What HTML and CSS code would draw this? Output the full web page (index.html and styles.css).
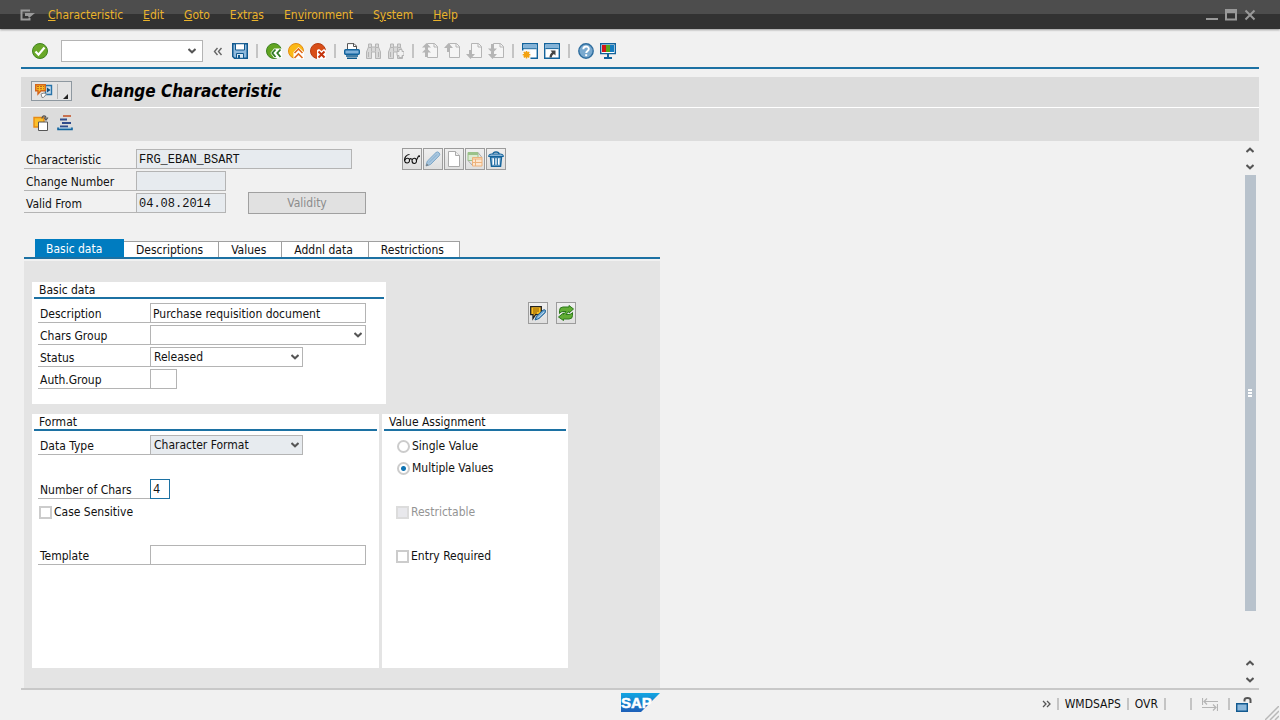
FILE: index.html
```html
<!DOCTYPE html>
<html lang="en">
<head>
    <meta charset="UTF-8">
    <meta name="viewport" content="width=device-width, initial-scale=1.0">
    <title>Change Characteristic</title>
    <link rel="stylesheet" href="styles.css">
</head>
<body>

<header class="titlebar">
    <button class="menu-icon" aria-label="Window menu">
        <svg width="16" height="12" viewBox="0 0 16 12"><path d="M10 1.5H1.5v9H9.5V9" fill="none" stroke="#9a9a9a" stroke-width="2"/><path d="M5 4h10L9 9l-1-2H5z" fill="#9a9a9a"/></svg>
    </button>
    <nav class="menu">
        <button><u>C</u>haracteristic</button>
        <button><u>E</u>dit</button>
        <button><u>G</u>oto</button>
        <button>Extr<u>a</u>s</button>
        <button>En<u>v</u>ironment</button>
        <button>S<u>y</u>stem</button>
        <button><u>H</u>elp</button>
    </nav>
    <div class="window-buttons">
        <button aria-label="Minimize"><svg width="12" height="12" viewBox="0 0 12 12"><path d="M0 10h12" stroke="#999" stroke-width="2"/></svg></button>
        <button aria-label="Maximize"><svg width="12" height="12" viewBox="0 0 12 12"><path d="M1 1v9.500h10V1z" fill="none" stroke="#999" stroke-width="2"/><path d="M0 0h12v4H0z" fill="#999"/></svg></button>
        <button aria-label="Close"><svg width="12" height="12" viewBox="0 0 12 12"><path d="M1.500 1.500l9 9M10.500 1.500l-9 9" stroke="#999" stroke-width="2"/></svg></button>
    </div>
</header>

<div class="window">
    <div class="toolbar">
        <button class="tool" aria-label="Enter"><svg class="icon" viewBox="0 0 16 16"><circle cx="8" cy="8" r="7.500" fill="#6aa828" stroke="#3f8420"/><path d="M3.500 8.500l3 3.200 6-7.200" fill="none" stroke="#fff" stroke-width="2.200"/></svg></button>
        <div class="select command">
            <select aria-label="Command"><option></option></select>
            <svg class="arrow" viewBox="0 0 8 6"><path d="M0.500 1L4 4.300 7.500 1" /></svg>
        </div>
        <button class="tool" aria-label="Hide command field"><svg class="icon" viewBox="0 0 16 16"><path d="M7.500 5L4.500 8.500l3 3.500M11.500 5l-3 3.500 3 3.500" fill="none" stroke="#666" stroke-width="1.400"/></svg></button>
        <button class="tool" aria-label="Save"><svg class="icon" viewBox="0 0 16 16"><path d="M.75.75h14.500v14.500H2.500L.75 13.500z" fill="#8fb9dc" stroke="#10598f" stroke-width="1.500"/><path d="M3.500.75h9V7h-9z" fill="#fff" stroke="#10598f"/><path d="M4.500 10.500h7v4.750h-7z" fill="#d9e8f4" stroke="#10598f"/><path d="M6 12h2v3H6z" fill="#10598f"/></svg></button>
        <span class="sep"></span>
        <button class="tool" aria-label="Back"><svg class="icon" viewBox="0 0 16 16"><circle cx="8" cy="8" r="7.500" fill="#62a420" stroke="#3d8222"/><path d="M8 5.500L4.500 10 8 15h8V5.500z" fill="#fff"/><path d="M9.500 6.500L6.300 10l3.200 4M14.500 6.500L11.300 10l3.200 4" fill="none" stroke="#2f7a24" stroke-width="1.800"/></svg></button>
        <button class="tool" aria-label="Exit"><svg class="icon" viewBox="0 0 16 16"><circle cx="8" cy="8" r="7.500" fill="#fbb917" stroke="#e58a10"/><path d="M5.500 9L10.500 4l5.500 5v7H5.500z" fill="#fff"/><path d="M6.500 10l4-4 4 4M6.500 15l4-4 4 4" fill="none" stroke="#df6a1a" stroke-width="1.600"/></svg></button>
        <button class="tool" aria-label="Cancel"><svg class="icon" viewBox="0 0 16 16"><circle cx="8" cy="8" r="7.500" fill="#d84e18" stroke="#b63c12"/><path d="M7 7l2-1 2.500 2L14 6l2 1.500V16H7z" fill="#fff"/><path d="M8.500 8.500l6 6M14.500 8.500l-6 6" stroke="#c4330c" stroke-width="2"/></svg></button>
        <span class="sep"></span>
        <button class="tool" aria-label="Print"><svg class="icon" viewBox="0 0 16 16"><path d="M3.500 7V.600h6.500l2.500 2.500V7" fill="#fff" stroke="#555"/><path d="M9.500.500v3h3" fill="none" stroke="#555"/><rect x=".700" y="6.700" width="14.600" height="4.600" rx="1" fill="#7fb1da" stroke="#12639c" stroke-width="1.400"/><path d="M2 13h12M3 15.200h10" stroke="#0d5a8e" stroke-width="1.500"/></svg></button>
        <button class="tool" aria-label="Find" disabled><svg class="icon" viewBox="0 0 16 16"><use href="#i-binoculars"/></svg></button>
        <button class="tool" aria-label="Find next" disabled><svg class="icon" viewBox="0 0 16 16"><use href="#i-binoculars"/><path d="M9 8.500h2V6.500h3v2h2v4h-2v2h-3v-2H9z" fill="#f1f1f1" stroke="#b5b5b5"/></svg></button>
        <span class="sep"></span>
        <button class="tool" aria-label="First page" disabled><svg class="icon" viewBox="0 0 16 16"><use href="#i-page"/><path d="M4.500 0L0 4.500h3V6h3V4.500h3zM4.500 5L0 9.500h3V14h3V9.500h3z" fill="#b5b5b5"/></svg></button>
        <button class="tool" aria-label="Previous page" disabled><svg class="icon" viewBox="0 0 16 16"><use href="#i-page"/><path d="M4.500 0L0 5h3v4h3V5h3z" fill="#b5b5b5"/></svg></button>
        <button class="tool" aria-label="Next page" disabled><svg class="icon" viewBox="0 0 16 16"><use href="#i-page"/><path d="M3 7h3v4h3l-4.500 5L0 11h3z" fill="#b5b5b5"/></svg></button>
        <button class="tool" aria-label="Last page" disabled><svg class="icon" viewBox="0 0 16 16"><use href="#i-page"/><path d="M3 1h3v4.500h3L4.500 10 0 5.500h3zM3 9h3v2h3l-4.500 5L0 11h3z" fill="#b5b5b5"/></svg></button>
        <span class="sep"></span>
        <button class="tool" aria-label="Create session"><svg class="icon" viewBox="0 0 16 16"><path d="M.700.700h14.600v14.600H.700z" fill="#fff" stroke="#12639c" stroke-width="1.400"/><path d="M1.400 1.400h13.200V5H1.400z" fill="#83b3d8"/><path d="M0 5.700h14.600" stroke="#12639c"/><path d="M0 7.500h8.500V16H0z" fill="#f5f5f5"/><path d="M4.500 8v7.500M.700 11.700h7.600M1.800 9l5.400 5.400M7.200 9l-5.400 5.400" stroke="#f0a114" stroke-width="1.500"/><circle cx="4.500" cy="11.700" r="2.600" fill="#f3a211"/></svg></button>
        <button class="tool" aria-label="Create shortcut"><svg class="icon" viewBox="0 0 16 16"><path d="M.700.700h14.600v14.600H.700z" fill="#fff" stroke="#12639c" stroke-width="1.400"/><path d="M1.400 1.400h13.200V5H1.400z" fill="#83b3d8"/><path d="M1.400 5.600h13.200" stroke="#12639c"/><path d="M6.500 7.500h5v5l-1.600-1.600c-1.500 1-2 2-2.100 3.600H5.500c0-2.400.900-4 2.600-5.300z" fill="#444"/></svg></button>
        <span class="sep"></span>
        <button class="tool" aria-label="Help"><svg class="icon" viewBox="0 0 16 16"><circle cx="8" cy="8" r="7.200" fill="#79a9cf" stroke="#2f6e9f" stroke-width="1.400"/><path d="M5.300 6.200c.1-3.600 5.600-3.500 5.500-.2 0 2-2.600 1.900-2.600 4" fill="none" stroke="#fff" stroke-width="1.900"/><path d="M7.200 11.200h2v2h-2z" fill="#fff"/></svg></button>
        <button class="tool" aria-label="Customize local layout"><svg class="icon" viewBox="0 0 16 16"><path d="M.700.700h14.600v9.900H.700z" fill="#fff" stroke="#12639c" stroke-width="1.400"/><path d="M2 2h4v7H2z" fill="#d31616"/><path d="M6 2h4v7H6z" fill="#57a51c"/><path d="M10 2h4v7h-4z" fill="#147cc0"/><path d="M7 11h2v3h3v2H4v-2h3z" fill="#12639c"/></svg></button>
    </div>

    <div class="title">
        <button class="services" aria-label="Services for object">
            <svg width="18" height="16" viewBox="0 0 18 16"><path d="M10.500 2.500h6v9h-6z" fill="#c6dcee" stroke="#2873a8" stroke-width="1.400"/><path d="M12 4.500l3.500 2.500-3.500 2.500z" fill="#154f7c"/><path d="M.700 1.700h9.600v6H6L3 11V7.700H.700z" fill="#f8bd22" stroke="#d3661c" stroke-width="1.400"/><path d="M2 3.500h7M2 5.700h7" stroke="#bf5c22" stroke-dasharray="2 1"/><path d="M6 11l3-1 2.500 1-3 3.500H7z" fill="#fff" stroke="#888"/></svg>
            <span class="services-more"><svg width="5" height="5" viewBox="0 0 5 5"><path d="M5 0v5H0z" fill="#222"/></svg></span>
        </button>
        <h1>Change Characteristic</h1>
    </div>
    <div class="app-toolbar">
        <button class="tool" aria-label="Other characteristic"><svg class="icon" viewBox="0 0 16 16"><path d="M1 2.500h10V12H1z" fill="#fbbf2b" stroke="#e78a15" stroke-width="1.400"/><path d="M5.500 7h9v8.500h-9z" fill="#fff" stroke="#555"/><path d="M9 3.500C9 0 13 0 13 3.500M11 2.500l2 2.500 2-2.500" fill="none" stroke="#555" stroke-width="1.200"/></svg></button>
        <button class="tool" aria-label="Hierarchy"><svg class="icon" viewBox="0 0 16 16"><path d="M6 1h8" stroke="#c8714f" stroke-width="2"/><path d="M3 4.500h7M5 8h9M3 11.500h8" stroke="#2f4c8c" stroke-width="2"/><path d="M1 12.500v2h14v-2" fill="#9bc2e0" stroke="#12639c" stroke-width="1.600"/></svg></button>
    </div>

    <main class="content">
        <div class="form">
            <section class="head">
                <div class="head-fields">
                    <div class="row"><label for="characteristic">Characteristic</label><input class="mono long" id="characteristic" value="FRG_EBAN_BSART" readonly></div>
                    <div class="row"><label for="changeNumber">Change Number</label><input class="mono date" id="changeNumber" readonly></div>
                    <div class="row"><label for="validFrom">Valid From</label><input class="mono date" id="validFrom" value="04.08.2014" readonly><button class="validity" disabled>Validity</button></div>
                </div>
                <div class="actions">
                    <button class="box" aria-label="Display"><svg class="icon" viewBox="0 0 16 16"><path d="M5.500 3.500C3 3.500.500 6 .500 9c0 4 5 4 5 .500S1.500 7 .700 9.500M5.500 8.500c1-1.200 2-1 2.500 0M8 9.500c0 4 4.500 4 4.500.500S8.500 6.500 8 9.500M12.500 9.500c.200-1.500 1-2 1.500-3.500 1-2 2-1 1.500 0" fill="none" stroke="#111" stroke-width="1.100"/></svg></button>
                    <button class="box" aria-label="Change" disabled><svg class="icon" viewBox="0 0 16 16"><path d="M1 15l1.300-4.800L11 1.500q1.500-1.300 3 .200t.200 3L5.500 13.500z" fill="#a9c6de" stroke="#7ba6c8"/><path d="M4 11.500L12 3.500" stroke="#83aed0"/><path d="M1 15l.800-2.600 1.800 1.800z" fill="#777"/></svg></button>
                    <button class="box" aria-label="Create" disabled><svg class="icon" viewBox="0 0 16 16"><path d="M2.500.500h7l4 4v11h-11z" fill="#fff" stroke="#aaa"/><path d="M9.500.500v4h4" fill="#eee" stroke="#aaa"/></svg></button>
                    <button class="box" aria-label="Copy" disabled><svg class="icon" viewBox="0 0 16 16"><path d="M1 1.500h10v8H1z" fill="#dcebd3" stroke="#9bc28a"/><path d="M1 3h10" stroke="#9bc28a" stroke-width="2"/><path d="M1 9.500l4.500 5M11 1.500l4 5" stroke="#aaa"/><path d="M5.500 6.500h9.500v8.500H5.500z" fill="#fce6cf" stroke="#edb27b"/><path d="M5.500 8h9.500M5.500 11.500h9.500M8.500 8v7" stroke="#edb27b"/></svg></button>
                    <button class="box" aria-label="Delete"><svg class="icon" viewBox="0 0 16 16"><path d="M5 3q0-2 3-2t3 2" fill="none" stroke="#14639a" stroke-width="1.400"/><path d="M2.500 6l1 9.300h9L13.500 6z" fill="#9dc3e0" stroke="#14639a" stroke-width="1.500"/><path d="M.500 5.500q0-2.500 3-2.500h9q3 0 3 2.500z" fill="#8cb8da" stroke="#14639a"/><path d="M5.500 7.500v6M8 7.500v6M10.500 7.500v6" stroke="#fff" stroke-width="1.400"/><path d="M6.700 7v7M9.300 7v7" stroke="#14639a"/></svg></button>
                </div>
            </section>

            <div class="tabs" role="tablist">
                <button class="tab active" role="tab" aria-selected="true">Basic data</button>
                <button class="tab" role="tab">Descriptions</button>
                <button class="tab" role="tab">Values</button>
                <button class="tab" role="tab">Addnl data</button>
                <button class="tab" role="tab">Restrictions</button>
            </div>

            <div class="panel">
                <div class="panel-top">
                    <section class="group basic">
                        <h2>Basic data</h2>
                        <div class="row"><label for="description">Description</label><input class="long" id="description" value="Purchase requisition document"></div>
                        <div class="row"><label for="charsGroup">Chars Group</label>
                            <div class="select long"><select id="charsGroup"><option></option></select><svg class="arrow" viewBox="0 0 8 6"><path d="M0.500 1L4 4.300 7.500 1"/></svg></div>
                        </div>
                        <div class="row"><label for="status">Status</label>
                            <div class="select medium"><select id="status"><option>Released</option></select><svg class="arrow" viewBox="0 0 8 6"><path d="M0.500 1L4 4.300 7.500 1"/></svg></div>
                        </div>
                        <div class="row"><label for="authGroup">Auth.Group</label><input class="short" id="authGroup"></div>
                    </section>
                    <div class="actions text-actions">
                        <button class="box" aria-label="Long text"><svg class="icon" viewBox="0 0 16 16"><path d="M.700 1.700h10.600v8H5.500L3 13.500V9.700H.700z" fill="#fbbd20" stroke="#222" stroke-width="1.300"/><path d="M3 4h6M3 6h6M3 8h4" stroke="#8a5b00"/><path d="M5 15l1.500-4 6.500-5.800q1.500-1 2.300 0t0 2.300L9 13.500z" fill="#6ba5d1" stroke="#1b5e91"/><path d="M7.500 13l6.500-6" stroke="#c2dbef"/></svg></button>
                        <button class="box" aria-label="Refresh"><svg class="icon" viewBox="0 0 16 16"><path d="M1.500 5.500Q1.500 2 5 2h6V.500L15.500 4 11 8V6.500h-.500L8 9.500h3q2.500 0 3.500-2v3q0 3.500-3.500 3.500H5.500v1.500L.500 12l5-4v1.500L8 6.500H5q-2.500 0-3.500 2z" fill="#62ad35" stroke="#2c7a1b"/></svg></button>
                    </div>
                </div>

                <div class="panel-bottom">
                    <section class="group format">
                        <h2>Format</h2>
                        <div class="row"><label for="dataType">Data Type</label>
                            <div class="select medium locked"><select id="dataType"><option>Character Format</option></select><svg class="arrow" viewBox="0 0 8 6"><path d="M0.500 1L4 4.300 7.500 1"/></svg></div>
                        </div>
                        <div class="row after-gap"><label for="numChars">Number of Chars</label><input class="mono tiny current" id="numChars" value="4"></div>
                        <div class="check"><input type="checkbox" id="caseSensitive"><label for="caseSensitive">Case Sensitive</label></div>
                        <div class="row after-gap"><label for="template">Template</label><input class="long" id="template"></div>
                    </section>
                    <section class="group assignment">
                        <h2>Value Assignment</h2>
                        <div class="check"><input type="radio" name="assign" id="single"><label for="single">Single Value</label></div>
                        <div class="check"><input type="radio" name="assign" id="multiple" checked><label for="multiple">Multiple Values</label></div>
                        <div class="check after-gap"><input type="checkbox" id="restrictable" disabled><label for="restrictable">Restrictable</label></div>
                        <div class="check after-gap"><input type="checkbox" id="required"><label for="required">Entry Required</label></div>
                    </section>
                </div>
            </div>
        </div>

        <div class="scroll">
            <button aria-label="Scroll to top"><svg class="arrow" viewBox="0 0 8 6"><path d="M0.500 5L4 1.700 7.500 5"/></svg></button>
            <button aria-label="Scroll down"><svg class="arrow" viewBox="0 0 8 6"><path d="M0.500 1L4 4.300 7.500 1"/></svg></button>
            <div class="track"><div class="thumb"><i></i><i></i><i></i></div></div>
            <button aria-label="Scroll up"><svg class="arrow" viewBox="0 0 8 6"><path d="M0.500 5L4 1.700 7.500 5"/></svg></button>
            <button aria-label="Scroll to bottom"><svg class="arrow" viewBox="0 0 8 6"><path d="M0.500 1L4 4.300 7.500 1"/></svg></button>
        </div>
    </main>

    <footer class="status">
        <svg class="logo" width="39" height="19" viewBox="0 0 39 19" role="img" aria-label="SAP">
            <defs><linearGradient id="sap" x1="0" y1="0" x2="0" y2="1"><stop offset="0" stop-color="#12a5e2"/><stop offset="1" stop-color="#1d5fb8"/></linearGradient></defs>
            <path d="M0 0h39L20 19H0z" fill="url(#sap)"/>
            <text class="logo-text" x="0" y="15">SAP</text>
        </svg>
        <div class="status-fields">
            <button class="expand" aria-label="Show status fields"><svg width="9" height="8" viewBox="0 0 9 8"><path d="M1 1l3 3-3 3M5 1l3 3-3 3" fill="none" stroke="#555" stroke-width="1.300"/></svg></button>
            <span class="sep"></span>
            <span>WMDSAPS</span>
            <span class="sep"></span>
            <span>OVR</span>
            <span class="sep"></span>
            <span class="empty"></span>
            <span class="sep"></span>
            <svg class="transfer" width="16" height="13" viewBox="0 0 16 13"><path d="M.500 0v7M15.500 6v7M2 3.500h14M0 9.500h14M5 .500l-3 3 3 3M11 6.500l3 3-3 3" fill="none" stroke="#b5b5b5" stroke-width="1.200"/></svg>
            <span class="sep"></span>
            <svg class="lock" width="16" height="15" viewBox="0 0 16 15"><path d="M8.500 4.500V3q0-2 3-2t3 2v3" fill="none" stroke="#555" stroke-width="2"/><path d="M.700 6.700h10.600v7.600H.700z" fill="#8bb8dc" stroke="#12598f" stroke-width="1.400"/></svg>
        </div>
        <svg class="grip" width="14" height="14" viewBox="0 0 14 14"><path d="M0 14L14 0M5 14l9-9M10 14l4-4" stroke="#b8b8b8" stroke-width="1.500"/></svg>
    </footer>
</div>

<svg class="sprite" aria-hidden="true">
    <symbol id="i-binoculars" viewBox="0 0 16 16"><path d="M2.500 1h3v3h4V1h3v3l2 5v6.500h-5V9h-4v6.500h-5V9l2-5z" fill="#d8d8d8" stroke="#b5b5b5"/><path d="M2.500 4.500h3v4M12.500 4.500h-3v4M2.500 9v5M12.500 9v5" fill="none" stroke="#b5b5b5"/></symbol>
    <symbol id="i-page" viewBox="0 0 16 16"><path d="M5.500.500h7l3 3v11h-10z" fill="#f5f5f5" stroke="#b5b5b5"/><path d="M12 .500v3.500h3.500" fill="none" stroke="#b5b5b5"/></symbol>
</svg>

</body>
</html>
```
FILE: styles.css
```css
:root{
    --blue: #007cc0;
    --line: #1c71a3;
    --bg: #f1f1f1;
    --bar: #dcdcdc;
    --border: #b4b4b4;
    --readonly: #e7ebef;
}

*{
    box-sizing: border-box;
}

body{
    margin: 0;
    min-height: 100vh;
    display: flex;
    flex-direction: column;
    background: var(--bg);
    color: #111;
    font: 12px/16px "DejaVu Sans Condensed", "Noto Sans", sans-serif;
}

button, input, select{
    margin: 0;
    padding: 0;
    border: 0;
    border-radius: 0;
    background: none;
    color: inherit;
    font: inherit;
}

svg{
    display: block;
}

.sprite{
    display: none;
}

.icon{
    width: 16px;
    height: 16px;
}

/* title bar */
.titlebar{
    display: flex;
    align-items: center;
    height: 29px;
    padding: 0 24px 0 20px;
    background: linear-gradient(#4d4d4d 14px, #323232 14px);
    box-shadow: 0 1px 2px #999;
}

.menu-icon{
    width: 28px;
}

.menu{
    display: flex;
    gap: 20px;
    color: #eab32c;
}

.window-buttons{
    display: flex;
    gap: 7px;
    margin-left: auto;
}

/* toolbars */
.window{
    flex: 1;
    display: flex;
    flex-direction: column;
    padding: 0 21px;
}

.toolbar{
    display: flex;
    align-items: center;
    height: 40px;
    padding: 6px 0 0 8px;
    border-bottom: 2px solid var(--line);
}

.tool{
    display: flex;
    justify-content: center;
    align-items: center;
    width: 22px;
    height: 22px;
}

.toolbar .sep{
    width: 2px;
    height: 14px;
    margin: 0 5px;
    background: #c4c4c4;
}

.command{
    width: 142px;
    margin: 0 4px 0 10px;
}

.toolbar .command{
    height: 22px;
}

.title{
    display: flex;
    align-items: center;
    gap: 19px;
    height: 30px;
    margin-top: 8px;
    padding: 0 10px 2px;
    background: var(--bar);
}

.title h1{
    margin: 0;
    font-size: 17px;
    line-height: 20px;
    font-style: italic;
    color: #000;
}

.services{
    display: flex;
    align-items: center;
    justify-content: space-between;
    width: 41px;
    height: 20px;
    padding: 0 3px;
    border: 1px solid #8e98a0;
    background: #e4e4e4;
}

.services-more{
    display: flex;
    align-items: flex-end;
    height: 15px;
    padding-left: 5px;
    border-left: 1px solid #b4b4b4;
}

.app-toolbar{
    display: flex;
    align-items: center;
    gap: 2px;
    height: 34px;
    padding: 0 9px 4px;
    border-top: 1px solid #fff;
    background: var(--bar);
}

/* form */
.content{
    flex: 1;
    display: flex;
    justify-content: space-between;
}

.form{
    display: flex;
    flex-direction: column;
    width: 639px;
    padding-left: 3px;
}

.head{
    display: flex;
    gap: 36px;
    padding-top: 8px;
}

.row{
    display: flex;
    align-items: flex-end;
    height: 20px;
    margin-bottom: 2px;
}

.row label{
    width: 112px;
    height: 18px;
    padding-left: 2px;
    border-bottom: 1px solid var(--border);
    line-height: 18px;
    white-space: nowrap;
}

.row input, .select{
    height: 20px;
    border: 1px solid var(--border);
    background: #fff;
}

.row input{
    padding: 1px 2px 0;
}

.row input:read-only, .row .locked{
    background: var(--readonly);
}

.row .mono{
    font-family: "Liberation Mono", monospace;
}

.long{ width: 216px; }
.medium{ width: 153px; }
.date{ width: 90px; }
.short{ width: 27px; }
.tiny{ width: 20px; }

.row .current{
    border-color: var(--line);
    outline: none;
}

.select{
    display: grid;
    align-items: center;
}

.select > *{
    grid-area: 1 / 1;
}

.select select{
    width: 100%;
    height: 100%;
    padding: 0 20px 0 3px;
    appearance: none;
}

.arrow{
    width: 8px;
    height: 6px;
    fill: none;
    stroke: #555;
    stroke-width: 2;
}

.select .arrow{
    justify-self: end;
    margin-right: 3px;
    pointer-events: none;
}

.command .arrow{
    margin-right: 6px;
}

.head-fields{
    width: 342px;
}

.validity{
    width: 118px;
    height: 22px;
    margin-left: 22px;
    border: 1px solid #a0a0a0;
    background: #e1e1e1;
    color: #8c8c8c;
}

.row .validity{
    margin-bottom: -1px;
}

.actions{
    display: flex;
    gap: 1px;
}

.head .actions{
    margin-top: -1px;
}

.box{
    display: flex;
    justify-content: center;
    align-items: center;
    width: 20px;
    height: 22px;
    border: 1px solid #9c9c9c;
    background: linear-gradient(#efefef, #dfdfdf);
}

/* tabs */
.tabs{
    display: flex;
    align-items: flex-end;
    height: 20px;
    margin-top: 24px;
    padding-left: 11px;
    border-bottom: 2px solid var(--line);
}

.tab{
    height: 16px;
    padding: 0 15px 0 12px;
    border-top: 1px solid #a0a0a0;
    border-right: 1px solid #a0a0a0;
    background: #fff;
    line-height: 16px;
}

.tab.active{
    width: 89px;
    height: 18px;
    padding: 2px 11px 0;
    border: 0;
    background: var(--blue);
    color: #fff;
    text-align: left;
}

.panel{
    flex: 1;
    margin-top: 2px;
    padding: 21px 8px 20px;
    background: #e4e4e4;
}

.panel-top{
    display: flex;
    gap: 142px;
    margin-bottom: 10px;
}

.text-actions{
    gap: 8px;
    padding-top: 20px;
}

.panel-bottom{
    display: flex;
    gap: 3px;
}

.group{
    padding: 0 2px;
    background: #fff;
}

.group h2{
    height: 17px;
    margin: 0 0 4px;
    padding-left: 5px;
    border-bottom: 2px solid var(--line);
    font-size: 12px;
    font-weight: normal;
    line-height: 16px;
}

.group .row{
    margin-left: 4px;
}

.group .after-gap{
    margin-top: 24px;
}

.basic{
    width: 354px;
    padding-bottom: 13px;
}

.format{
    width: 347px;
    min-height: 254px;
}

.assignment{
    width: 186px;
}

.check{
    display: flex;
    align-items: center;
    gap: 2px;
    height: 22px;
    padding-left: 5px;
}

.format .check{
    margin-bottom: -2px;
}

.assignment .check{
    padding-left: 12px;
}

.assignment .after-gap{
    margin-top: 22px;
}

.check input{
    width: 13px;
    height: 13px;
    border: 2px solid #ccc;
    background: #fff;
    appearance: none;
}

.check input[type="radio"]{
    border-radius: 50%;
    margin-left: 1px;
}

.check input[type="radio"]:checked{
    background: radial-gradient(circle, #0f74b4 2px, #fff 3px);
}

.check input:disabled{
    border-color: #dcdcdc;
    background: #e8e8ec;
}

.check input:disabled + label{
    color: #949494;
}

/* scrollbar */
.scroll{
    display: flex;
    flex-direction: column;
    align-items: center;
    width: 12px;
    margin-right: 3px;
}

.scroll button{
    display: flex;
    justify-content: center;
    align-items: center;
    width: 12px;
    height: 17px;
}

.track{
    flex: 1;
    width: 11px;
}

.thumb{
    display: flex;
    flex-direction: column;
    justify-content: center;
    align-items: center;
    gap: 1px;
    height: 91%;
    background: #b8c2cc;
}

.thumb i{
    width: 4px;
    height: 2px;
    background: #fff;
}

/* status bar */
.status{
    display: grid;
    grid-template-columns: 1fr auto 1fr;
    height: 32px;
    border-top: 2px solid #c8c8c8;
    position: relative;
}

.logo{
    grid-column: 2;
    margin-top: 3px;
}

.logo-text{
    font: bold 15px "Liberation Sans", sans-serif;
    fill: #fff;
    stroke: #fff;
    stroke-width: 0.5px;
}

.status-fields{
    display: flex;
    align-items: center;
    justify-self: end;
    height: 28px;
    padding-right: 7px;
}

.status-fields .sep{
    width: 2px;
    height: 12px;
    margin: 0 6px;
    background: #c4c4c4;
}

.empty{
    width: 12px;
}

.transfer{
    margin: 0 4px;
}

.grip{
    position: absolute;
    right: -20px;
    bottom: 0;
}
```
